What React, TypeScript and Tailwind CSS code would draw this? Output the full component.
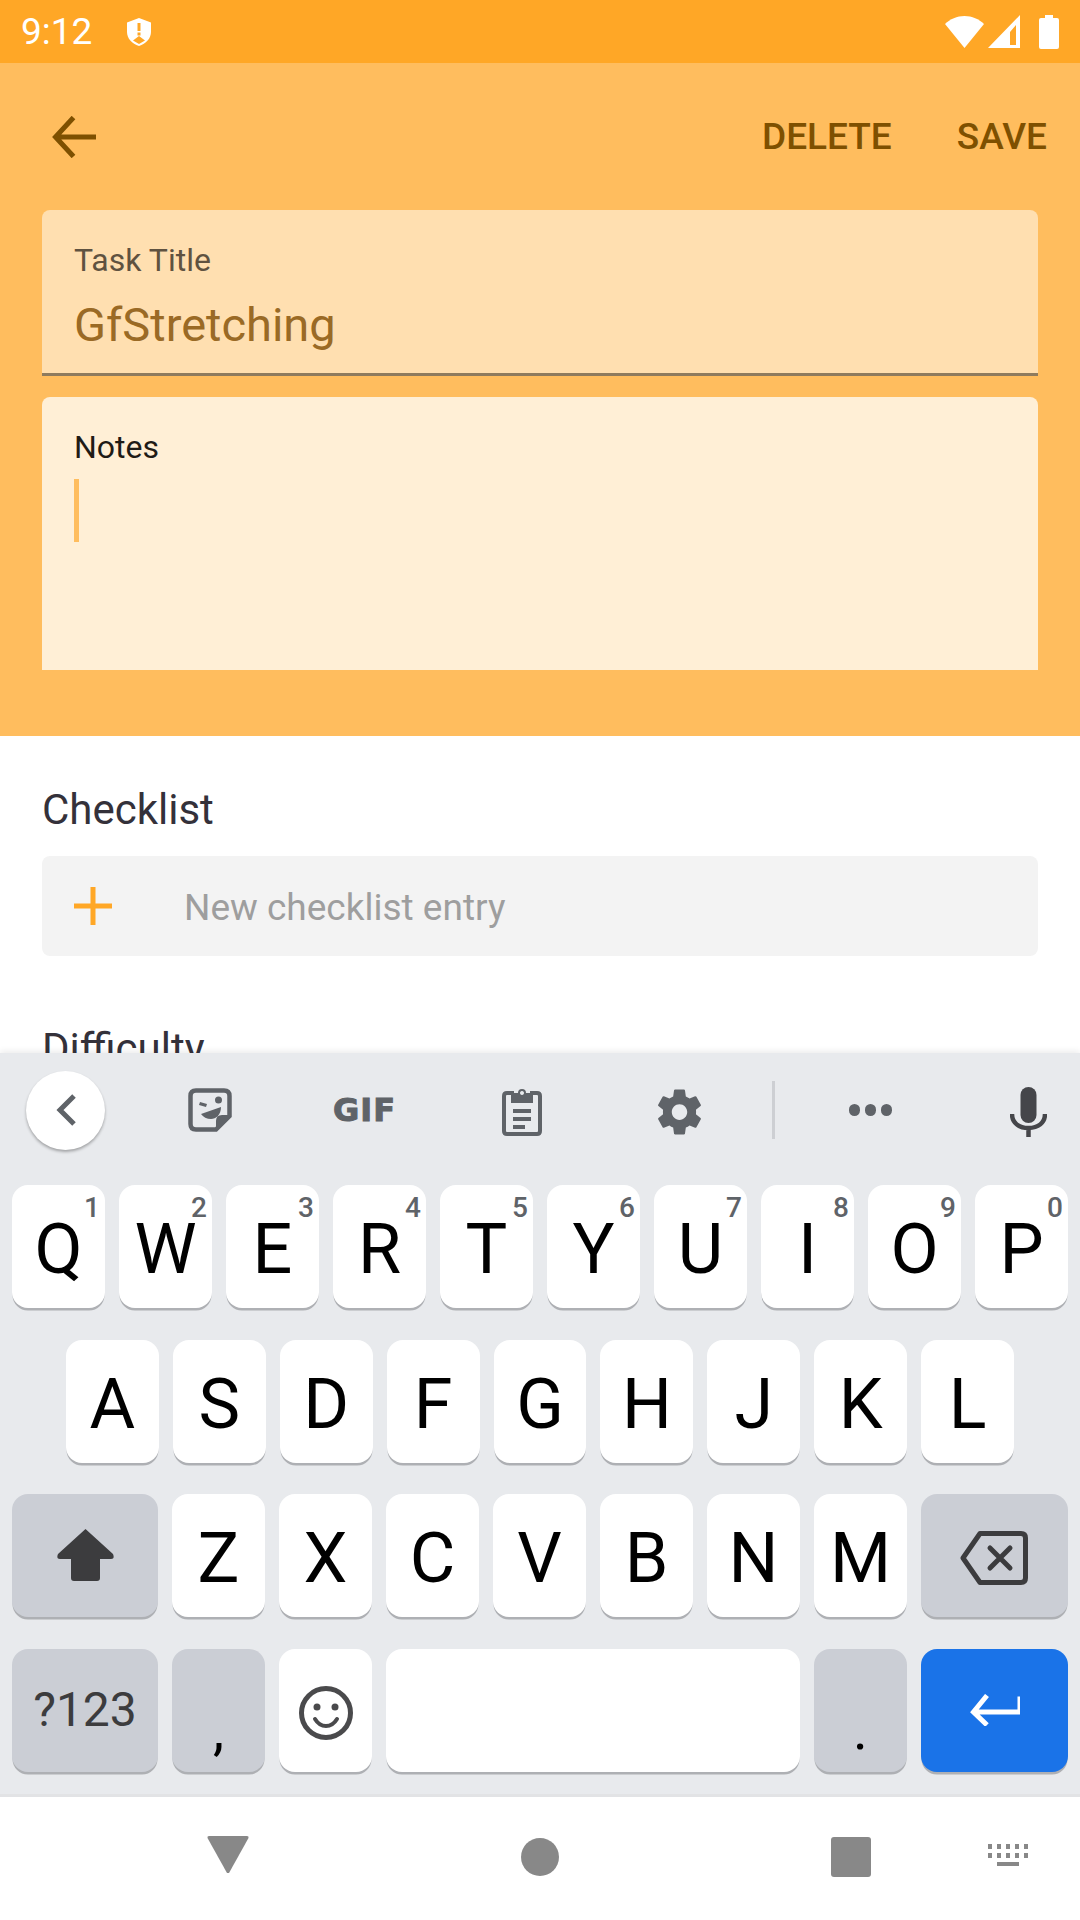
import React from "react";

const row1 = [
  ["Q", "1"],
  ["W", "2"],
  ["E", "3"],
  ["R", "4"],
  ["T", "5"],
  ["Y", "6"],
  ["U", "7"],
  ["I", "8"],
  ["O", "9"],
  ["P", "0"],
];
const row2 = ["A", "S", "D", "F", "G", "H", "J", "K", "L"];
const row3 = ["Z", "X", "C", "V", "B", "N", "M"];

const keyBase =
  "relative flex h-[123px] items-center justify-center rounded-[16px] shadow-[0_3px_0_-0.5px_#aeb0b4]";
const whiteKey = `${keyBase} bg-white pt-[5px] text-[70px] leading-none text-black`;
const greyKey = `${keyBase} bg-[#CBCED5] text-[#3c3c3e]`;

const StatusBar = () => (
  <div className="flex h-[63px] shrink-0 items-center bg-[#FFA726] text-white">
    <span className="ml-[21px] text-[37px] leading-none">9:12</span>
    <svg className="ml-[35px]" width="24" height="28" viewBox="0 0 24 28">
      <path
        fill="#fff"
        fillRule="evenodd"
        d="M12 0 24 4.500V14c0 6.500-5 11.500-12 14C5 25.500 0 20.500 0 14V4.500ZM10.500 5v8h3V5ZM10.500 14.500v3h3v-3ZM12 18l-6 4.500 6 3.500 6-3.500Z"
      />
    </svg>
    <svg className="ml-auto" width="39" height="32" viewBox="0 0 39 32">
      <path fill="#fff" d="M19.500 32 0 8C5 3 12 0 19.500 0S34 3 39 8Z" />
    </svg>
    <svg className="ml-[4px]" width="32" height="33" viewBox="0 0 32 33">
      <path fill="#fff" fillRule="evenodd" d="M32 0V33H0ZM28 10 22 17V30H28Z" />
    </svg>
    <svg className="ml-[19px] mr-[21px]" width="20" height="34" viewBox="0 0 20 34">
      <path fill="#fff" d="M6 0H14V3H18Q20 3 20 5V32Q20 34 18 34H2Q0 34 0 32V5Q0 3 2 3H6Z" />
    </svg>
  </div>
);

const Toolbar = () => (
  <div className="flex h-[147px] shrink-0 items-center text-[#7E5000]">
    <svg className="ml-[52px]" width="44" height="42" viewBox="0 0 44 42" fill="none" stroke="#7E5000" strokeWidth="5">
      <path d="M44 21H4M21.500 1.500 3.500 21l18 19.500" />
    </svg>
    <span className="ml-auto text-[37px] font-medium leading-none">DELETE</span>
    <span className="ml-[65px] mr-[33px] text-[37px] font-medium leading-none">SAVE</span>
  </div>
);

const Form = () => (
  <div className="shrink-0 bg-[#FFBD5E] pb-[66px]">
    <Toolbar />
    <div className="mx-[42px] flex h-[166px] flex-col rounded-t-lg border-b-[3px] border-[#8E7B5E] bg-[#FFDFB0] px-[32px] pt-[32px]">
      <span className="text-[32px] leading-[36px] text-[#5f5240]">Task Title</span>
      <span className="mt-[20px] text-[47px] leading-[54px] text-[#9A6A25]">GfStretching</span>
    </div>
    <div className="mx-[42px] mt-[21px] flex h-[273px] flex-col rounded-t-lg bg-[#FFEFD6] px-[32px] pt-[32px]">
      <span className="text-[32px] leading-[36px] text-[#1f1b16]">Notes</span>
      <div className="mt-[14px] h-[63px] w-[5px] bg-[#FFBD5E]" />
    </div>
  </div>
);

const Body = () => (
  <div className="min-h-0 flex-1 overflow-hidden bg-white px-[42px] pt-[50px]">
    <div className="text-[42px] leading-[48px] text-[#34313A]">Checklist</div>
    <div className="mt-[22px] flex h-[100px] items-center rounded-lg bg-[#F3F3F3]">
      <svg className="ml-[32px]" width="38" height="38" viewBox="0 0 38 38">
        <path fill="#FFA726" d="M16.500 0h5v16.500H38v5H21.500V38h-5V21.500H0v-5h16.500Z" />
      </svg>
      <span className="ml-[72px] pt-[2px] text-[37px] leading-none text-[#9E9E9E]">New checklist entry</span>
    </div>
    <div className="mt-[69px] text-[42px] leading-[48px] text-[#34313A]">Difficulty</div>
  </div>
);

const Suggestions = () => (
  <div className="flex h-[132px] items-center">
    <div className="ml-[26px] mt-[-18px] flex h-[79px] w-[79px] items-center justify-center rounded-full bg-white shadow-[0_2px_3px_rgba(0,0,0,0.3)]">
      <svg width="20" height="32" viewBox="0 0 20 32" fill="none" stroke="#5F6368" strokeWidth="5">
        <path d="M18 2 4 16l14 14" />
      </svg>
    </div>
    <svg className="ml-[83px] mt-[-18px]" width="44" height="44" viewBox="0 0 44 44">
      <path
        fill="none"
        stroke="#5F6368"
        strokeWidth="4.500"
        d="M8 2.500h28q5.500 0 5.500 5.500v20L28 41.500H8q-5.500 0-5.500-5.500V8q0-5.500 5.500-5.500Z"
      />
      <path fill="#5F6368" d="M43 27 28 43V33q0-6 6-6ZM12 14l7 2-1 3-7-2ZM27 12a3.500 3.500 0 1 0 7 0 3.500 3.500 0 1 0-7 0ZM13 26l20-7c0 8-5 12-10 12-4 0-8-2-10-5Z" />
    </svg>
    <span className="ml-[101px] mt-[-18px] text-[32px] font-black leading-none tracking-[1px] text-[#5F6368] [-webkit-text-stroke:1px_#5F6368] [font-family:'DejaVu_Sans',sans-serif]">
      GIF
    </span>
    <svg className="ml-[106px] mt-[-16px]" width="40" height="50" viewBox="0 0 40 50">
      <path
        fill="none"
        stroke="#5F6368"
        strokeWidth="4"
        d="M12 7H5Q2 7 2 10V45Q2 48 5 48H35Q38 48 38 45V10Q38 7 35 7H28"
      />
      <path
        fill="#5F6368"
        fillRule="evenodd"
        d="M9 7h7a4 4 0 0 1 8 0h7v10H9ZM20 5a2 2 0 1 0 .01 0Z M11 23h18v4H11ZM11 31h18v4H11ZM11 39h12v4H11Z"
      />
    </svg>
    <svg className="ml-[111px] mt-[-14px]" width="53" height="54" viewBox="0 0 24 24" preserveAspectRatio="none">
      <path
        fill="#5F6368"
        d="M19.430 12.980c.04-.32.070-.64.070-.98s-.03-.66-.07-.98l2.110-1.650c.19-.15.240-.42.120-.64l-2-3.460c-.12-.22-.39-.3-.61-.22l-2.490 1c-.52-.4-1.080-.73-1.690-.98l-.38-2.650C14.460 2.180 14.250 2 14 2h-4c-.25 0-.46.18-.49.42l-.38 2.650c-.61.25-1.170.59-1.690.98l-2.490-1c-.23-.09-.49 0-.61.22l-2 3.460c-.13.22-.07.49.12.64l2.110 1.650c-.04.32-.07.65-.07.98s.03.66.07.98l-2.110 1.650c-.19.15-.24.42-.12.64l2 3.460c.12.22.39.3.61.22l2.490-1c.52.4 1.080.73 1.690.98l.38 2.650c.03.24.24.42.49.42h4c.25 0 .46-.18.49-.42l.38-2.650c.61-.25 1.170-.59 1.690-.98l2.490 1c.23.09.49 0 .61-.22l2-3.460c.12-.22.07-.49-.12-.64l-2.110-1.650ZM12 15.500c-1.930 0-3.500-1.570-3.500-3.500s1.570-3.500 3.500-3.500 3.500 1.570 3.500 3.500-1.570 3.500-3.500 3.500Z"
      />
    </svg>
    <div className="ml-[66px] mt-[-18px] h-[58px] w-[3px] bg-[#CDCFD3]" />
    <div className="ml-[74px] mt-[-18px] flex gap-[5px]">
      <div className="h-[12px] w-[11px] rounded-full bg-[#5F6368]" />
      <div className="h-[12px] w-[11px] rounded-full bg-[#5F6368]" />
      <div className="h-[12px] w-[11px] rounded-full bg-[#5F6368]" />
    </div>
    <svg className="ml-[118px] mt-[-14px]" width="37" height="50" viewBox="0 0 37 50">
      <rect x="10.500" y="0" width="16" height="36" rx="8" fill="#45464A" />
      <path fill="none" stroke="#45464A" strokeWidth="4.500" d="M2 27c0 9 7 14 16.500 14S35 36 35 27M18.500 40v10" />
    </svg>
  </div>
);

const Keyboard = () => (
  <div className="h-[741px] shrink-0 bg-[#E8EAED] shadow-[0_-2px_6px_rgba(0,0,0,0.08)]">
    <Suggestions />
    <div className="flex flex-col gap-[31.67px] px-[12px]">
      <div className="grid grid-cols-10 gap-[14px]">
        {row1.map(([letter, digit]) => (
          <div key={letter} className={whiteKey}>
            {letter}
            <span className="absolute right-[5px] top-[9px] text-[28px] font-medium leading-none text-[#5F6368]">
              {digit}
            </span>
          </div>
        ))}
      </div>
      <div className="grid grid-cols-9 gap-[14px] px-[54px]">
        {row2.map((letter) => (
          <div key={letter} className={whiteKey}>
            {letter}
          </div>
        ))}
      </div>
      <div className="flex gap-[14px]">
        <div className={`${greyKey} w-[146px]`}>
          <svg className="mt-[-1px]" width="57" height="52" viewBox="0 0 57 52">
            <path fill="#3c3c3e" d="M28.500 0 56 25q2 5-2 5H43V49q0 3-3 3H17q-3 0-3-3V30H3q-4 0-2-5Z" />
          </svg>
        </div>
        {row3.map((letter) => (
          <div key={letter} className={`${whiteKey} w-[93px]`}>
            {letter}
          </div>
        ))}
        <div className={`${greyKey} flex-1`}>
          <svg className="mr-[2px] mt-[5px]" width="68" height="54" viewBox="0 0 68 54" fill="none" stroke="#3c3c3e" strokeWidth="5" strokeLinecap="round" strokeLinejoin="round">
            <path d="M20 2.500H61Q65.500 2.500 65.500 7V47Q65.500 51.500 61 51.500H20L3 27Z" />
            <path d="M30 17 50 37M50 17 30 37" />
          </svg>
        </div>
      </div>
      <div className="flex gap-[14px]">
        <div className={`${greyKey} w-[146px] text-[48px] leading-none`}>?123</div>
        <div className={`${greyKey} w-[93px] items-end pb-[14px] text-[56px] leading-none text-black`}>,</div>
        <div className={`${whiteKey} w-[93px] pt-0`}>
          <svg width="54" height="54" viewBox="0 0 54 54" fill="none" stroke="#4a4a4c">
            <circle cx="27" cy="27" r="24.500" strokeWidth="5" />
            <circle cx="18" cy="21" r="3.500" fill="#4a4a4c" stroke="none" />
            <circle cx="36" cy="21" r="3.500" fill="#4a4a4c" stroke="none" />
            <path d="M16 33c3 5 7 7 11 7s8-2 11-7" strokeWidth="4" strokeLinecap="round" />
          </svg>
        </div>
        <div className={`${whiteKey} w-[414px]`} />
        <div className={`${greyKey} w-[93px] items-end pb-[14px] text-[56px] leading-none text-black`}>.</div>
        <div className={`${keyBase} flex-1 bg-[#1A73E8]`}>
          <svg width="50" height="32" viewBox="0 0 50 32" fill="none" stroke="#fff" strokeWidth="5">
            <path d="M50 2.500V18H4M17 1.500 3.500 18 17 31" />
          </svg>
        </div>
      </div>
    </div>
  </div>
);

const NavBar = () => (
  <div className="flex h-[126px] shrink-0 items-center border-t-[3px] border-[#E2E3E5] bg-white">
    <svg className="ml-[207px] mt-[-8px]" width="42" height="37" viewBox="0 0 42 37">
      <path fill="#888" d="M2 0H40Q42 0 41.500 2L22 37H20L0.500 2Q0 0 2 0Z" />
    </svg>
    <div className="ml-[272px] mt-[-3px] h-[38px] w-[38px] rounded-full bg-[#888]" />
    <div className="ml-[272px] mt-[-3px] h-[40px] w-[40px] rounded-[3px] bg-[#888]" />
    <svg className="ml-[117px] mt-[-3px]" width="40" height="26" viewBox="0 0 40 26">
      <path
        fill="#888"
        d="M0 0h4v5H0ZM9 0h4v5H9ZM18 0h4v5h-4ZM27 0h4v5h-4ZM36 0h4v5h-4ZM0 9h4v5H0ZM9 9h4v5H9ZM18 9h4v5h-4ZM27 9h4v5h-4ZM36 9h4v5h-4ZM9 18h22v4H9Z"
      />
    </svg>
  </div>
);

export default function App() {
  return (
    <div className="flex h-[1920px] w-[1080px] flex-col overflow-hidden bg-white [font-family:Roboto,sans-serif]">
      <StatusBar />
      <Form />
      <Body />
      <Keyboard />
      <NavBar />
    </div>
  );
}
